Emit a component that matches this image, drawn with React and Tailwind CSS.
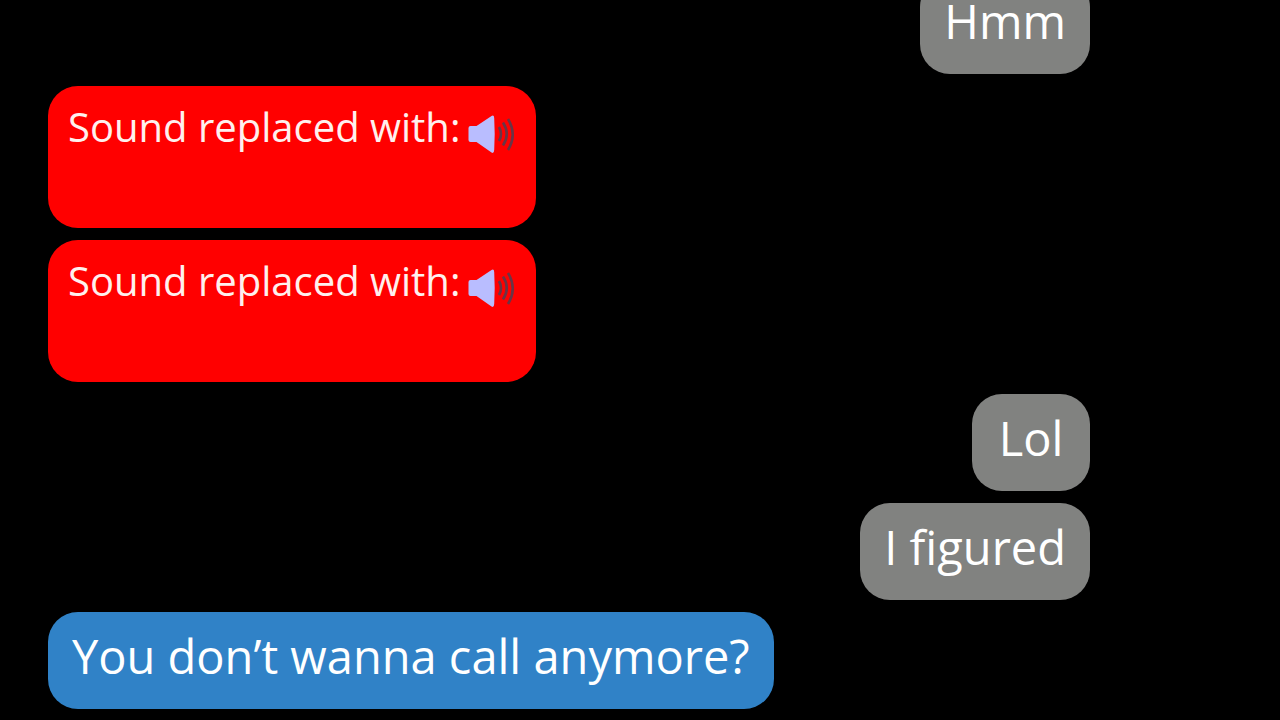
function Speaker() {
  return (
    <svg className="mt-4 ml-2 h-12 w-12 shrink-0" viewBox="0 0 48 48" fill="none" aria-hidden="true">
      <path
        d="M0.500 18Q0.500 16 2.500 16H8.500L23.500 6Q26 4.500 26.200 8Q27.200 24 26.200 40Q26 44 23.500 42.500L8.500 32H2.500Q0.500 32 0.500 30Z"
        fill="#b9bdff"
      />
      <path d="M31 17q4 7 0 14M35 12.500q7.500 11.500 0 23M40 9q9.500 15.500 0 31" stroke="#693546" strokeWidth="2.600" />
    </svg>
  );
}

function SoundMessage() {
  return (
    <li className="mt-3 flex h-[142px] items-start self-start rounded-[30px] bg-[#ff0000] px-5 pt-2 text-[40px] leading-[66px] whitespace-nowrap text-[#fff0ee]">
      <span>Sound replaced with:</span>
      <Speaker />
    </li>
  );
}

function Bubble({ text, look }) {
  return (
    <li
      className={`h-[97px] min-w-[118px] rounded-[30px] px-6 text-center text-[47px] leading-[88px] whitespace-nowrap ${look}`}
    >
      {text}
    </li>
  );
}

export default function App() {
  return (
    <main className="h-screen overflow-hidden bg-black pr-[190px] pl-12 font-['Open_Sans','Noto_Sans',sans-serif] text-white">
      <ul className="-mt-[23px] flex flex-col">
        <Bubble text="Hmm" look="self-end bg-[#818280]" />
        <SoundMessage />
        <SoundMessage />
        <Bubble text="Lol" look="mt-3 self-end bg-[#818280]" />
        <Bubble text="I figured" look="mt-3 self-end bg-[#818280]" />
        <Bubble text="You don’t wanna call anymore?" look="mt-3 self-start bg-[#3082c7]" />
      </ul>
    </main>
  );
}
